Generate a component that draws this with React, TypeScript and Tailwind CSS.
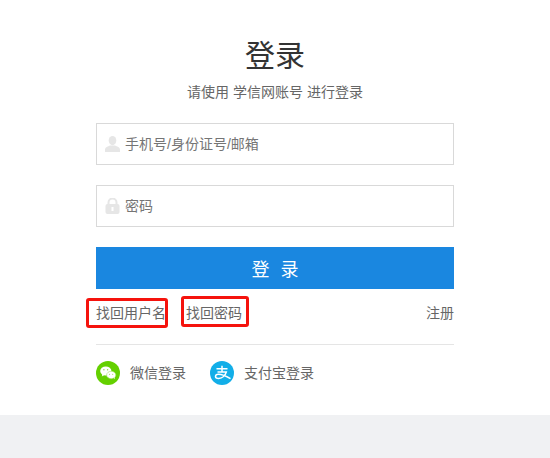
function UserIcon() {
  return (
    <svg width="15" height="16" viewBox="0 0 15 16" className="shrink-0">
      <ellipse cx="7.5" cy="4.6" rx="3.8" ry="4.6" fill="#e6e6e6" />
      <path d="M0 16v-2.6c0-1.8 2.8-2.8 5-3.8h5c2.2 1 5 2 5 3.8V16z" fill="#e6e6e6" />
    </svg>
  )
}

function LockIcon() {
  return (
    <svg width="15" height="16" viewBox="0 0 15 16" className="shrink-0">
      <path d="M3.5 7V4.5a4 4 0 0 1 8 0V7" fill="none" stroke="#e6e6e6" strokeWidth="2" />
      <rect x="0.5" y="6" width="14" height="10" rx="2" fill="#e6e6e6" />
      <rect x="6.5" y="9" width="2" height="4" fill="#fff" />
    </svg>
  )
}

function WechatIcon() {
  return (
    <svg width="24" height="24" viewBox="0 0 24 24" className="shrink-0">
      <circle cx="12" cy="12" r="12" fill="#64d000" />
      <ellipse cx="9.8" cy="10" rx="5.6" ry="4.6" fill="#fff" />
      <path d="M6.5 13l-.7 2.4 2.6-1.4z" fill="#fff" />
      <ellipse cx="15.2" cy="14" rx="4.6" ry="3.7" fill="#fff" stroke="#a5e466" strokeWidth="0.6" />
      <path d="M17.6 16.8l1.2 1.4-.2-2.1z" fill="#fff" />
      <circle cx="7.9" cy="8.7" r="0.7" fill="#8cdc40" />
      <circle cx="11.6" cy="8.7" r="0.7" fill="#8cdc40" />
      <circle cx="13.6" cy="13.2" r="0.55" fill="#8cdc40" />
      <circle cx="16.7" cy="13.2" r="0.55" fill="#8cdc40" />
    </svg>
  )
}

function AlipayIcon() {
  return (
    <svg width="24" height="24" viewBox="0 0 24 24" className="shrink-0">
      <circle cx="12" cy="12" r="12" fill="#12aee8" />
      <path d="M6.5 7.8h11M12 4.8v6.2M7.5 11h8.8c-1 3.4-4 6.4-7.6 6.4-2 0-3.2-.8-3.2-2 0-1.4 1.4-2.2 3-2.2 3.4 0 8 2 12 4.4" fill="none" stroke="#fff" strokeWidth="1.5" />
    </svg>
  )
}

function Field({ icon, placeholder }: { icon: React.ReactNode; placeholder: string }) {
  return (
    <div className="h-[42px] border border-[#d9d9d9] flex items-center gap-[5px] pl-2 bg-white">
      {icon}
      <span className="text-sm text-[#757575]">{placeholder}</span>
    </div>
  )
}

export default function App() {
  return (
    <div className="w-[550px] h-[458px] bg-[#f0f1f3] font-['Liberation_Sans','Noto_Sans_CJK_SC',sans-serif] overflow-hidden">
      <div className="h-[415px] bg-white flex flex-col items-center">
        <h1 className="mt-[36px] mb-[-1px] text-[30px] leading-[40px] text-[#333] font-normal">登录</h1>
        <p className="mt-[7px] text-sm leading-5 text-[#666]">请使用 学信网账号 进行登录</p>
        <div className="w-[358px] mt-[21px] flex flex-col">
          <Field icon={<UserIcon />} placeholder="手机号/身份证号/邮箱" />
          <div className="mt-5">
            <Field icon={<LockIcon />} placeholder="密码" />
          </div>
          <button className="mt-5 h-[42px] pt-[3px] bg-[#1a87e0] text-white text-lg tracking-[3px] pl-[3px]">登 录</button>
          <div className="mt-[14px] h-5 flex items-center text-sm text-[#666]">
            <a className="relative w-[70px]">
              找回用户名
              <span className="absolute -left-[10px] -right-[2px] -top-[5px] -bottom-[5px] border-[3px] border-[#f5130d] rounded-[3px]" />
            </a>
            <a className="relative ml-[20px]">
              找回密码
              <span className="absolute -left-[5px] -right-[7px] -top-[7px] -bottom-[4px] border-[3px] border-[#f5130d] rounded-[3px]" />
            </a>
            <a className="ml-auto">注册</a>
          </div>
          <div className="mt-[21px] border-t border-[#e5e5e5] pt-4 flex items-center text-sm text-[#666]">
            <WechatIcon />
            <span className="ml-[10px]">微信登录</span>
            <div className="ml-[24px]">
              <AlipayIcon />
            </div>
            <span className="ml-[10px]">支付宝登录</span>
          </div>
        </div>
      </div>
    </div>
  )
}
